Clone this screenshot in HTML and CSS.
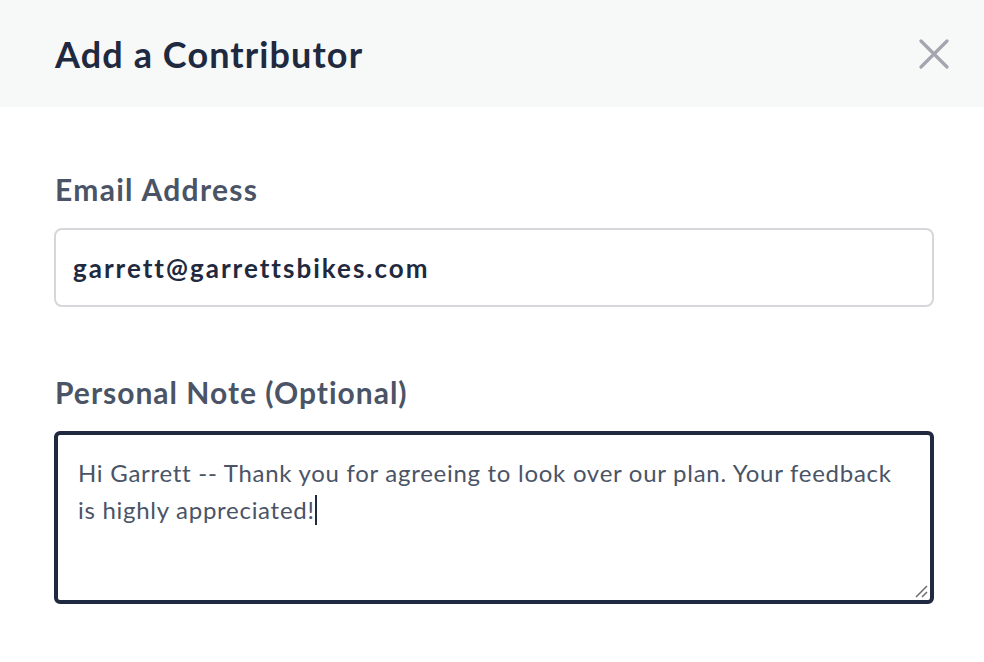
FILE: index.html
```html
<!DOCTYPE html>
<html lang="en">
<head>
<meta charset="utf-8">
<title>Add a Contributor</title>
<link rel="stylesheet" href="styles.css">
</head>
<body>
<div class="modal">
  <header class="modal-header">
    <h1 class="modal-title">Add a Contributor</h1>
    <button class="close-btn" type="button" aria-label="Close">
      <svg width="30" height="30" viewBox="0 0 30 30"><path d="M2 2 L28 28 M28 2 L2 28" stroke="#a3a6ae" stroke-width="3.2" stroke-linecap="round" fill="none"/></svg>
    </button>
  </header>
  <main class="modal-body">
    <div class="field">
      <label class="field-label">Email Address</label>
      <div class="input">garrett@garrettsbikes.com</div>
    </div>
    <div class="field">
      <label class="field-label field-label-note">Personal Note (Optional)</label>
      <div class="textarea">
        <p class="textarea-text">Hi Garrett -- Thank you for agreeing to look over our plan. Your feedback<br>is highly appreciated!<span class="caret"></span></p>
        <svg class="resize-handle" width="14" height="14" viewBox="0 0 14 14"><path d="M2 13 L13 2 M8 13 L13 8" stroke="#6b6b6b" stroke-width="1.5" fill="none"/></svg>
      </div>
    </div>
  </main>
</div>
</body>
</html>
```
FILE: styles.css
```css
* { box-sizing: border-box; }
html, body { margin: 0; padding: 0; background: #ffffff; }
body { font-family: Lato, "Noto Sans", sans-serif; width: 984px; height: 662px; overflow: hidden; }

.modal-header {
  height: 107px;
  background: #f7f8f8;
  display: flex;
  align-items: center;
  justify-content: space-between;
  padding: 0 35px 0 55px;
}
.modal-title {
  margin: 0;
  font-size: 36px;
  font-weight: 700;
  color: #1f2a40;
  letter-spacing: 1.1px;
}
.close-btn {
  border: 0;
  background: transparent;
  padding: 0;
  width: 30px;
  height: 30px;
  display: flex;
}

.modal-body { padding: 64px 50px 0 54px; }
.field { display: flex; flex-direction: column; }
.field + .field { margin-top: 67px; }
.field-label {
  font-size: 30px;
  font-weight: 700;
  color: #4a5466;
  line-height: 36px;
  margin-bottom: 21px;
  padding-left: 1px;
  letter-spacing: 1.3px;
}
.field-label-note { letter-spacing: 1px; }
.input {
  height: 79px;
  border: 2px solid #d6d7db;
  border-radius: 8px;
  padding: 0 17px;
  display: flex;
  align-items: center;
  font-size: 26px;
  font-weight: 700;
  color: #1f2a40;
  letter-spacing: 2px;
}
.textarea {
  position: relative;
  height: 173px;
  border: 4px solid #1f2a40;
  border-radius: 6px;
  padding: 19px 20px;
}
.textarea-text {
  margin: 0;
  font-size: 24px;
  line-height: 37px;
  color: #4a5466;
  letter-spacing: 0.72px;
}
.caret {
  display: inline-block;
  width: 2px;
  height: 30px;
  background: #1f2a40;
  vertical-align: -6px;
  margin-left: 0;
}
.resize-handle {
  position: absolute;
  right: 2px;
  bottom: 2px;
}
```
